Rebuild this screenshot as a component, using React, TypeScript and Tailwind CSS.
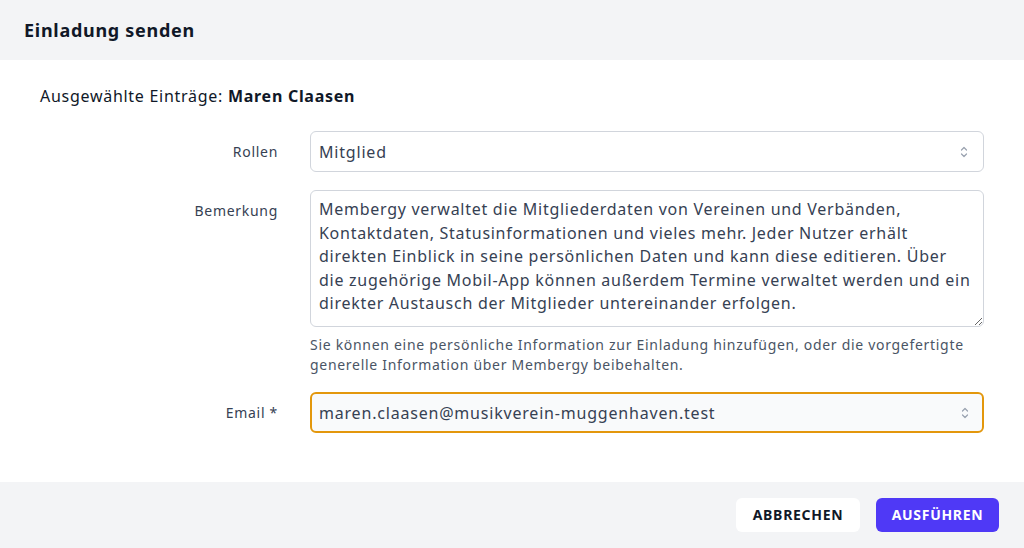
import React from 'react';

const font = { fontFamily: '"Noto Sans", "Liberation Sans", sans-serif' };

const remark =
  'Membergy verwaltet die Mitgliederdaten von Vereinen und Verbänden, Kontaktdaten, Statusinformationen und vieles mehr. Jeder Nutzer erhält direkten Einblick in seine persönlichen Daten und kann diese editieren. Über die zugehörige Mobil-App können außerdem Termine verwaltet werden und ein direkter Austausch der Mitglieder untereinander erfolgen.';

const Chevrons: React.FC = () => (
  <svg width="10" height="16" viewBox="0 0 10 16" fill="none" className="text-gray-400">
    <path d="M2.5 6l2.5-2.5 2.5 2.5" stroke="currentColor" strokeWidth="1.2" strokeLinecap="round" strokeLinejoin="round" />
    <path d="M2.5 10l2.5 2.5 2.5-2.5" stroke="currentColor" strokeWidth="1.2" strokeLinecap="round" strokeLinejoin="round" />
  </svg>
);

interface RowProps {
  label: string;
  children: React.ReactNode;
}

const Row: React.FC<RowProps> = ({ label, children }) => (
  <div className="flex items-start">
    <div className="w-[278px] shrink-0 text-right text-sm tracking-[0.05em] text-gray-700 pt-[11px]">{label}</div>
    <div className="ml-[32px] flex-1">{children}</div>
  </div>
);

export default function App() {
  return (
    <div className="w-[1024px] h-[548px] flex flex-col bg-white text-gray-800" style={font}>
      {/* Header */}
      <div className="h-[60px] shrink-0 bg-gray-100 flex items-center px-6">
        <h2 className="text-lg font-bold tracking-[0.04em] text-gray-900">Einladung senden</h2>
      </div>

      {/* Body */}
      <div className="flex-1 pt-[24px]">
        <p className="pl-10 text-base tracking-[0.045em] text-gray-900">
          Ausgewählte Einträge: <span className="font-bold">Maren Claasen</span>
        </p>

        <div className="mt-[23px] flex flex-col">
          <Row label="Rollen">
            <div className="h-[41px] w-[674px] rounded-md border border-gray-300 bg-white flex items-center justify-between px-2">
              <span className="text-base tracking-[0.05em] text-gray-700">Mitglied</span>
              <span className="mr-[6px]"><Chevrons /></span>
            </div>
          </Row>

          <div className="mt-[18px]">
            <Row label="Bemerkung">
              <textarea
                readOnly
                value={remark}
                className="block w-[674px] h-[137px] rounded-md border border-gray-300 bg-white px-2 py-[7px] text-base leading-[23.5px] tracking-[0.045em] text-gray-700 outline-none"
                style={font}
              />
              <p className="mt-[8px] w-[674px] text-sm leading-[20px] tracking-[0.05em] text-gray-600">
                Sie können eine persönliche Information zur Einladung hinzufügen, oder die vorgefertigte generelle Information über Membergy beibehalten.
              </p>
            </Row>
          </div>

          <div className="mt-[17px]">
            <Row label="Email *">
              <div className="h-[41px] w-[674px] rounded-md border-2 border-[#e3970c] bg-gray-50 flex items-center justify-between px-[7px]">
                <span className="text-base tracking-[0.05em] text-gray-700">maren.claasen@musikverein-muggenhaven.test</span>
                <span className="mr-[5px]"><Chevrons /></span>
              </div>
            </Row>
          </div>
        </div>
      </div>

      {/* Footer */}
      <div className="h-[66px] shrink-0 bg-gray-100 flex items-center justify-end gap-4 pr-[25px]">
        <button className="h-[34px] w-[124px] rounded-md bg-white text-sm font-bold tracking-wider text-gray-900">
          ABBRECHEN
        </button>
        <button className="h-[34px] w-[123px] rounded-md bg-indigo-600 text-sm font-bold tracking-wider text-white">
          AUSFÜHREN
        </button>
      </div>
    </div>
  );
}
